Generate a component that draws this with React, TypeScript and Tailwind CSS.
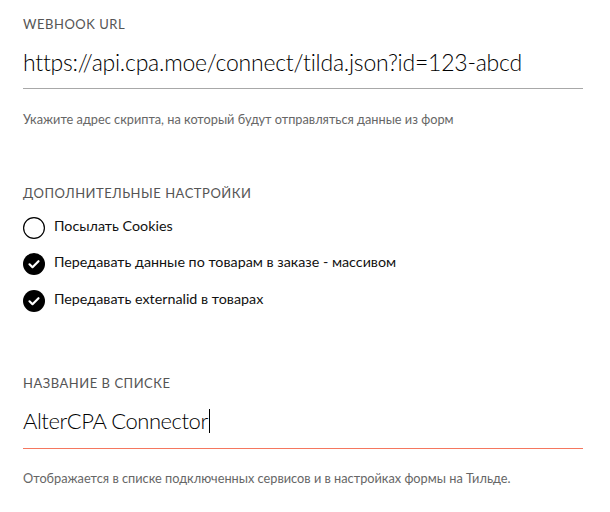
import React from "react";

const font = { fontFamily: "Lato, 'Open Sans', sans-serif" };

function Circle({ checked }: { checked: boolean }) {
  return checked ? (
    <svg width="22" height="22" viewBox="0 0 22 22" className="shrink-0">
      <circle cx="11" cy="11" r="11" fill="#000" />
      <path d="M6.5 11.3 L9.5 14.2 L15.5 8.2" fill="none" stroke="#fff" strokeWidth="2.2" strokeLinecap="round" strokeLinejoin="round" />
    </svg>
  ) : (
    <svg width="22" height="22" viewBox="0 0 22 22" className="shrink-0">
      <circle cx="11" cy="11" r="10.4" fill="none" stroke="#000" strokeWidth="1.2" />
    </svg>
  );
}

function Row({ checked, text, mt }: { checked: boolean; text: string; mt: string }) {
  return (
    <div className={`flex h-[22px] items-center gap-[9px] ${mt}`}>
      <Circle checked={checked} />
      <span className="pb-[4px] text-[14.3px] leading-[22px] text-[#111]">{text}</span>
    </div>
  );
}

export default function App() {
  return (
    <div className="w-[610px] h-[512px] bg-white px-[23px] pt-[14px] overflow-hidden" style={font}>
      <div className="w-[560px]">
        <div className="text-[13px] leading-[20px] tracking-[0.04em] text-[#555]">WEBHOOK URL</div>
        <div className="mt-[12px] border-b border-[#a8a8a8] pb-[10px]">
          <div className="text-[23px] leading-[32px] tracking-[-0.01em] font-light text-black whitespace-nowrap">
            https://api.cpa.moe/connect/tilda.json?id=123-abcd
          </div>
        </div>
        <div className="mt-[21px] text-[12.75px] leading-[18px] text-[#666]">
          Укажите адрес скрипта, на который будут отправляться данные из форм
        </div>

        <div className="mt-[55px] text-[13px] leading-[20px] tracking-[0.04em] text-[#555]">
          ДОПОЛНИТЕЛЬНЫЕ НАСТРОЙКИ
        </div>
        <Row checked={false} text="Посылать Cookies" mt="mt-[14px]" />
        <Row checked={true} text="Передавать данные по товарам в заказе - массивом" mt="mt-[14px]" />
        <Row checked={true} text="Передавать externalid в товарах" mt="mt-[15px]" />

        <div className="mt-[61px] text-[13px] leading-[20px] tracking-[0.04em] text-[#555]">
          НАЗВАНИЕ В СПИСКЕ
        </div>
        <div className="mt-[12px] border-b border-[#f5775f] pb-[11px]">
          <div className="flex items-center h-[32px] text-[22px] leading-[32px] tracking-[-0.02em] font-light text-black whitespace-nowrap">
            AlterCPA Connector
            <span className="ml-[1px] inline-block w-px h-[24px] bg-black" />
          </div>
        </div>
        <div className="mt-[20px] text-[12.75px] leading-[18px] text-[#666]">
          Отображается в списке подключенных сервисов и в настройках формы на Тильде.
        </div>
      </div>
    </div>
  );
}
